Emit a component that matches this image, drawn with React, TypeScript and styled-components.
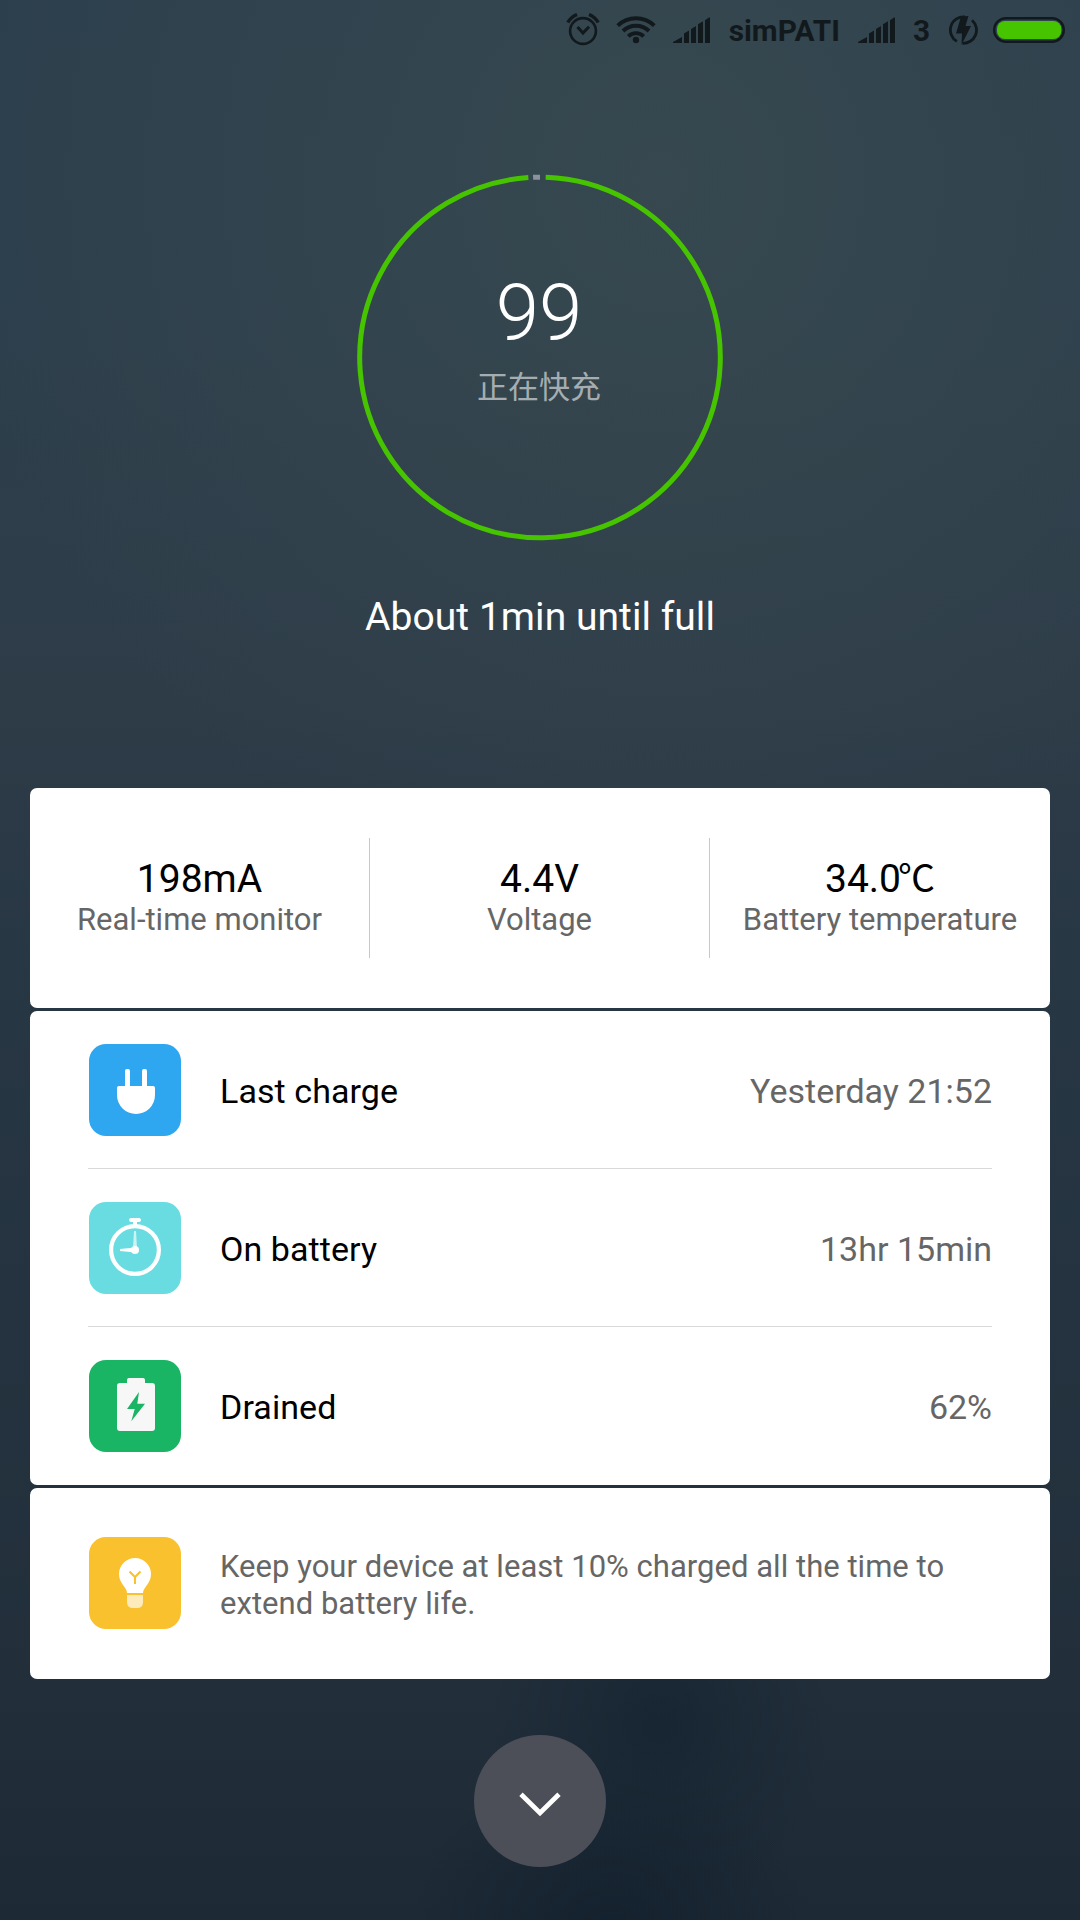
import React from "react";
import styled, { createGlobalStyle } from "styled-components";

const GlobalStyle = createGlobalStyle`
  * { box-sizing: border-box; }
  body { margin: 0; background: #273541; }
`;

const ink = "#12191d";

const Screen = styled.main`
  width: 1080px;
  height: 1920px;
  overflow: hidden;
  display: flex;
  flex-direction: column;
  align-items: center;
  font-family: Roboto, "Noto Sans CJK SC", sans-serif;
  background:
    radial-gradient(ellipse 170px 190px at 660px 1725px, rgba(17, 31, 45, 0.6), rgba(17, 31, 45, 0) 100%),
    radial-gradient(ellipse 200px 170px at 610px 1930px, rgba(15, 28, 41, 0.65), rgba(15, 28, 41, 0) 100%),
    radial-gradient(ellipse 700px 740px at 660px 180px, rgba(58, 75, 80, 0.75), rgba(58, 75, 80, 0) 100%),
    linear-gradient(180deg, #2c3f4d 0, #2d3f4c 350px, #2e3c48 700px, #283744 950px, #253340 1300px, #222f3b 1680px, #1d2a36 1920px);
`;

const StatusBar = styled.header`
  width: 100%;
  height: 60px;
  flex: none;
  display: flex;
  align-items: center;
  justify-content: flex-end;
  padding-right: 15px;
  color: ${ink};
  svg { flex: none; display: block; }
`;

const StatusText = styled.span<{ $left: number; $right: number }>`
  font-size: 29.8px;
  font-weight: 700;
  line-height: 34px;
  padding-top: 2px;
  margin: 0 ${(p) => p.$right}px 0 ${(p) => p.$left}px;
`;

const StatusIcon = styled.svg<{ $right: number }>`
  margin-right: ${(p) => p.$right}px;
`;

const Gauge = styled.section`
  width: 368px;
  height: 368px;
  margin-top: 114px;
  flex: none;
  display: grid;
  > * { grid-area: 1 / 1; }
`;

const GaugeText = styled.div`
  display: flex;
  flex-direction: column;
  align-items: center;
  padding-top: 94px;
`;

const Percent = styled.div`
  color: #fff;
  font-size: 78px;
  font-weight: 300;
  line-height: 92px;
  margin-right: 2px;
`;

const Mode = styled.div`
  margin-top: 3px;
  color: #a6adb1;
  font-family: "Noto Sans CJK SC", sans-serif;
  font-size: 31px;
  line-height: 44px;
  margin-right: 2px;
`;

const Remaining = styled.p`
  margin: 52px 0 0;
  flex: none;
  color: #fff;
  font-size: 39px;
  line-height: 46px;
  height: 46px;
  letter-spacing: 0.05px;
`;

const Cards = styled.div`
  width: 1020px;
  margin-top: 148px;
  flex: none;
  display: flex;
  flex-direction: column;
  gap: 3px;
`;

const Card = styled.section`
  background: #fff;
  border-radius: 7px;
`;

const Stats = styled(Card)`
  height: 220px;
  display: grid;
  grid-template-columns: repeat(3, 1fr);
  align-items: center;
`;

const Stat = styled.div`
  height: 120px;
  display: flex;
  flex-direction: column;
  align-items: center;
  padding-top: 18px;
  border-right: 1px solid #c8c8c8;
  &:last-child { border-right: 0; }
`;

const StatValue = styled.div`
  color: #000;
  font-size: 39px;
  line-height: 46px;
  height: 46px;
`;

const Unit = styled.span`
  font-size: 37px;
  margin-left: -3px;
  line-height: 1;
`;

const StatLabel = styled.div`
  color: #666;
  font-size: 31px;
  line-height: 36px;
  white-space: nowrap;
`;

const Rows = styled(Card)`
  padding: 0 58px;
`;

const Row = styled.div`
  height: 158px;
  display: flex;
  align-items: center;
  padding-left: 1px;
  border-bottom: 1px solid #d9d9d9;
  &:last-child { border-bottom-color: transparent; }
`;

const Tile = styled.div<{ $color: string }>`
  width: 92px;
  height: 92px;
  flex: none;
  border-radius: 17px;
  background: ${(p) => p.$color};
  svg { display: block; }
`;

const RowName = styled.div`
  flex: 1;
  margin-left: 39px;
  padding-top: 3px;
  color: #000;
  font-size: 34px;
  line-height: 40px;
  letter-spacing: 0.08px;
`;

const RowValue = styled.div`
  padding-top: 3px;
  color: #666;
  font-size: 34px;
  line-height: 40px;
`;

const Tip = styled(Card)`
  height: 191px;
  padding: 0 58px 1px 59px;
  display: flex;
  align-items: center;
`;

const TipText = styled.p`
  margin: 0 0 0 39px;
  padding-top: 4px;
  width: 760px;
  color: #666;
  font-size: 31px;
  line-height: 37px;
  letter-spacing: 0.03px;
`;

const Dismiss = styled.button`
  width: 132px;
  height: 132px;
  margin-top: 56px;
  flex: none;
  padding: 0;
  border: 0;
  border-radius: 50%;
  background: #4c4f58;
  svg { display: block; }
`;

const AlarmIcon = () => (
  <StatusIcon $right={16} width="34" height="34" viewBox="0 0 34 34" fill="none" stroke="currentColor">
    <circle cx="17" cy="18" r="12.9" strokeWidth="2.6" />
    <path d="M11.5 14l5.500 6 6-6.200" strokeWidth="3" />
    <path d="M1.800 9.500Q5 4 11 1.500M32.200 9.500Q29 4 23 1.500" strokeWidth="3.400" />
  </StatusIcon>
);

const WifiIcon = () => (
  <StatusIcon $right={17} width="40" height="30" viewBox="0 0 40 30" fill="none" stroke="currentColor" strokeWidth="3.900">
    <path d="M1.700 10.600a26.300 26.300 0 0 1 36.600 0" />
    <path d="M7 16a18.600 18.600 0 0 1 26 0" />
    <path d="M12.300 21.300a11 11 0 0 1 15.400 0" />
    <circle cx="20" cy="25" r="3.200" fill="currentColor" stroke="none" />
  </StatusIcon>
);

const SignalIcon = () => (
  <StatusIcon $right={0} width="38" height="26" viewBox="0 0 38 26" fill="currentColor">
    <path d="M0 26v-1L9 20v6zM11 26V16.500l5-3V26zM18 26V12l5-3v17zM25 26V7.300l5-3V26zM32 26V3.200l4-2.600h1V26z" />
  </StatusIcon>
);

const ChargeIcon = () => (
  <StatusIcon $right={15} width="30" height="30" viewBox="0 0 30 30">
    <path d="M8.900 26.400A13.200 13.200 0 0 1 17 1.900M24 5.200A13.200 13.200 0 0 1 14.500 28.300" fill="none" stroke="currentColor" strokeWidth="2.800" />
    <path d="M13 1.500L20.500 1 17.500 11h5.500L13.500 30 14 18.500H8z" fill="currentColor" />
  </StatusIcon>
);

const BatteryIcon = () => (
  <svg width="72" height="26" viewBox="0 0 72 26">
    <rect x="1.200" y="1.200" width="69.600" height="23.600" rx="11.800" fill="none" stroke={ink} strokeWidth="2.400" />
    <rect x="4" y="4" width="64.300" height="18" rx="8" fill="#47c400" />
  </svg>
);

const cx = 184;
const cy = 183.5;
const radius = 180.3;
const pointAt = (deg: number) => {
  const a = (deg * Math.PI) / 180;
  return `${cx + radius * Math.sin(a)} ${cy - radius * Math.cos(a)}`;
};

const GaugeRing = () => (
  <svg width="368" height="368" viewBox="0 0 368 368" fill="none" strokeWidth="5">
    <path d={`M${pointAt(1.8)}A${radius} ${radius} 0 1 1 ${pointAt(-3.7)}`} stroke="#47c400" />
    <path d={`M${pointAt(-2.2)}A${radius} ${radius} 0 0 1 ${pointAt(0)}`} stroke="#8b929b" />
  </svg>
);

const PlugIcon = () => (
  <svg width="92" height="92" viewBox="0 0 92 92" fill="#fff">
    <path d="M36 43V27q0-2 2-2h1q2 0 2 2v16zM53 43V27q0-2 2-2h1q2 0 2 2v16z" />
    <path d="M30 42h34q2 0 2 2v7a19 19 0 0 1-38 0v-7q0-2 2-2z" />
  </svg>
);

const StopwatchIcon = () => (
  <svg width="92" height="92" viewBox="0 0 92 92" fill="#fff">
    <circle cx="46" cy="48" r="23.900" fill="none" stroke="#fff" strokeWidth="4.200" />
    <rect x="40" y="16" width="12" height="4" rx="2" />
    <rect x="44" y="18" width="4" height="6" />
    <path d="M45 29h2l1 17h-4z" opacity=".65" />
    <path d="M31 47l13-1.200v4.400L31 49z" />
    <circle cx="46" cy="48" r="4" />
  </svg>
);

const DrainIcon = () => (
  <svg width="92" height="92" viewBox="0 0 92 92">
    <path d="M40 18h14q2 0 2 2v3h7q3 0 3 3v42q0 3-3 3H31q-3 0-3-3V26q0-3 3-3h7v-3q0-2 2-2z" fill="#f7f7f7" />
    <path d="M50 32l-1.700 11.800H56L42.300 61.300 45.700 49H38z" fill="#19b464" />
  </svg>
);

const BulbIcon = () => (
  <svg width="92" height="92" viewBox="0 0 92 92">
    <path d="M38 56c0-6-8-9-8-19a16 16 0 0 1 32 0c0 10-8 13-8 19z" fill="#fff" />
    <path d="M38 58h16v7q0 6-6 6h-4q-6 0-6-6z" fill="#fff" opacity=".68" />
    <path d="M40.500 34.500l5.500 5.500 5.500-5.500M46 40v7" fill="none" stroke="#fac12f" strokeWidth="2" />
  </svg>
);

const stats = [
  { value: "198mA", label: "Real-time monitor" },
  { value: "4.4V", label: "Voltage" },
  { value: "34.0", unit: "℃", label: "Battery temperature" },
];

const rows = [
  { name: "Last charge", value: "Yesterday 21:52", color: "#2ea7f0", icon: <PlugIcon /> },
  { name: "On battery", value: "13hr 15min", color: "#69dce2", icon: <StopwatchIcon /> },
  { name: "Drained", value: "62%", color: "#19b464", icon: <DrainIcon /> },
];

export default function App() {
  return (
    <>
      <GlobalStyle />
      <Screen>
        <StatusBar>
          <AlarmIcon />
          <WifiIcon />
          <SignalIcon />
          <StatusText $left={18} $right={18}>simPATI</StatusText>
          <SignalIcon />
          <StatusText $left={17} $right={18}>3</StatusText>
          <ChargeIcon />
          <BatteryIcon />
        </StatusBar>
        <Gauge>
          <GaugeRing />
          <GaugeText>
            <Percent>99</Percent>
            <Mode>正在快充</Mode>
          </GaugeText>
        </Gauge>
        <Remaining>About 1min until full</Remaining>
        <Cards>
          <Stats>
            {stats.map((s) => (
              <Stat key={s.label}>
                <StatValue>{s.value}{s.unit && <Unit>{s.unit}</Unit>}</StatValue>
                <StatLabel>{s.label}</StatLabel>
              </Stat>
            ))}
          </Stats>
          <Rows>
            {rows.map((r) => (
              <Row key={r.name}>
                <Tile $color={r.color}>{r.icon}</Tile>
                <RowName>{r.name}</RowName>
                <RowValue>{r.value}</RowValue>
              </Row>
            ))}
          </Rows>
          <Tip>
            <Tile $color="#fac12f"><BulbIcon /></Tile>
            <TipText>Keep your device at least 10% charged all the time to extend battery life.</TipText>
          </Tip>
        </Cards>
        <Dismiss aria-label="Close">
          <svg width="132" height="132" viewBox="0 0 132 132">
            <path d="M47 59.300L66 78l19-18.700" fill="none" stroke="#fff" strokeWidth="4.800" />
          </svg>
        </Dismiss>
      </Screen>
    </>
  );
}
